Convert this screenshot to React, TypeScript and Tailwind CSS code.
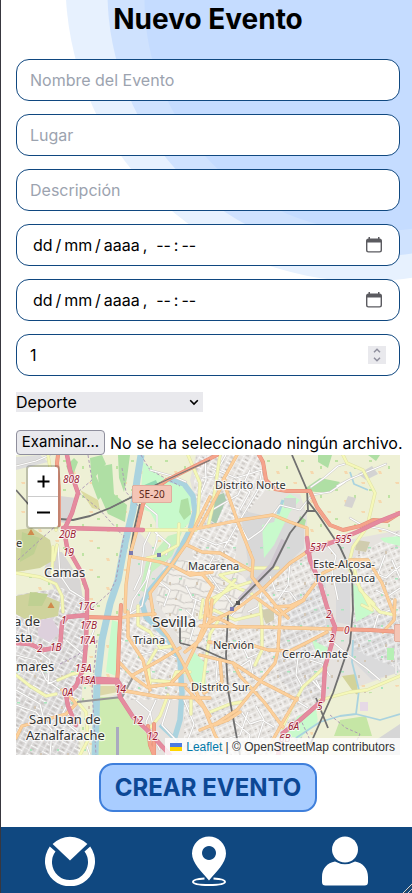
import { useState } from "react";
import type { ReactNode } from "react";

const fieldClass =
  "flex h-[42px] w-full items-center rounded-[13px] border border-[#104880] bg-white px-[13px] text-base text-black placeholder:text-[#9ca3af]";

function Backdrop() {
  return (
    <svg className="pointer-events-none absolute top-0 right-0 h-[290px] w-[412px]" viewBox="0 0 412 290" aria-hidden="true">
      <circle cx="365" cy="-18" r="299.5" fill="#e7f1fe" />
      <circle cx="372" cy="-8" r="264.5" fill="#cfe2fe" />
      <circle cx="376" cy="0" r="231.5" fill="#c5dcff" />
    </svg>
  );
}

const datePlaceholder = "dd\u2009/\u2009mm\u2009/\u2009aaaa\u2009,  --\u2009:\u2009--";

function DateField({ label }: { label: string }) {
  return (
    <div className={fieldClass}>
      <input
        type="text"
        aria-label={label}
        placeholder={datePlaceholder}
        className="h-6 min-w-0 flex-1 bg-transparent pl-[3px] outline-none placeholder:text-black"
      />
      <button type="button" aria-label="Abrir calendario" className="mr-[3px]">
        <svg width="18" height="18" viewBox="0 0 18 18" aria-hidden="true">
          <path
            fill="#5b5b60"
            fillRule="evenodd"
            d="M3.500 1h1.500v1.500h8V1h1.500v1.500a2.500 2.500 0 0 1 2.500 2.500V14a2.500 2.500 0 0 1-2.500 2.500h-11A2.500 2.500 0 0 1 1 14V5A2.500 2.500 0 0 1 3.500 2.500zM2.400 6.500V14a1.200 1.200 0 0 0 1.200 1.200h10.800a1.200 1.200 0 0 0 1.200-1.200V6.500z"
          />
        </svg>
      </button>
    </div>
  );
}

type RoadKind = "motorway" | "trunk" | "primary" | "secondary" | "minor";

const roadStyle: Record<RoadKind, { casing: string; fill: string; width: number }> = {
  motorway: { casing: "#dc7f95", fill: "#e58b9f", width: 3.8 },
  trunk: { casing: "#e38f78", fill: "#f5a48c", width: 3.4 },
  primary: { casing: "#ecbb83", fill: "#fcd09c", width: 2.7 },
  secondary: { casing: "#dfe0a6", fill: "#f5f8b8", width: 2.7 },
  minor: { casing: "#cbc9c6", fill: "#ffffff", width: 1.6 },
};

const roads: Record<RoadKind, string[]> = {
  minor: [
    "16 466L36 461L50 455", "58 545L60 575L70 590L86 600", "16 690L40 704L44 720", "28 620L30 645L50 660L48 684L66 676",
    "16 655L36 660L46 680L60 690", "16 705L36 712L52 730L50 755", "70 700L60 718L84 738L90 755", "66 640L84 655L94 630",
    "145 505L157 515L157 540L146 580L133 600L130 612", "151 530L144 545L141 575L134 590", "155 532L170 545L166 555",
    "150 470L172 476L186 482", "128 615L142 606L150 570", "133 640L150 634L166 640", "140 655L160 650L176 658",
    "136 700L150 712L154 730", "156 700L146 722L160 750", "170 700L162 725L176 740", "184 700L194 724L186 745",
    "205 455L206 480L198 500", "212 468L236 478L262 470L258 490L240 520L224 548", "234 480L250 492L240 510",
    "212 510L238 495L250 470", "226 455L214 476L202 478", "240 525L248 540L262 530L280 505L300 510L312 495L330 492L345 482",
    "200 538L216 545L232 540", "214 556L206 570L220 590L236 588", "262 590L258 607L248 612", "270 576L275 590L290 592L300 605",
    "290 563L288 585L278 600", "311 487L324 478L338 466L345 464", "337 486L350 479L362 474L386 464", "350 518L362 525L386 530L400 536",
    "327 545L336 556L332 572L338 600", "372 572L386 578L400 566", "376 590L388 596L400 588", "385 555L378 574L390 600", "390 610L378 615L374 628",
    "392 560L400 578", "333 642L348 655L366 668L380 680", "298 658L296 675L302 686", "310 660L322 664L330 676", "316 680L321 690L312 680",
    "292 698L308 708", "396 636L396 674", "214 590L226 596L236 610L228 620", "240 640L248 658L266 650", "238 668L250 660L254 680",
    "218 655L216 680L228 690L238 686", "240 710L250 724L262 720L274 727", "235 722L250 735L246 752", "256 706L264 720L256 745",
    "248 712L240 735L222 740", "196 600L190 624L176 620", "160 582L170 590L164 606", "186 586L192 598L202 602", "300 742L318 755", "186 610L196 620L190 640",
  ],
  secondary: [
    "16 573L40 577L56 584L62 596L63 612", "53 547L52 574", "48 455L52 480L57 500L56 530", "57 545L54 560", "16 675L30 686L46 696L56 694",
    "58 680L72 674L84 672", "76 700L86 712L88 740L80 755", "145 530L196 530", "179 524L178 545L160 555L147 558", "188 455L200 483L198 513L195 527",
    "220 455L212 510L208 527", "343 455L347 463L363 470L375 493L367 527L353 547L348 567L363 593L372 610L362 605", "220 575L250 568L278 568",
    "220 575L238 588L252 594", "210 600L232 588L250 582", "207 610L220 596L235 580", "138 606L138 625L150 632L160 648L172 646",
    "147 680L172 682L176 672L190 672", "150 684L148 664L156 650", "168 695L160 716L150 728", "191 697L191 714", "260 600L262 625L262 650L255 665",
    "327 665L303 687L293 705L282 728", "203 600L200 618L214 610L235 620L260 614", "202 690L206 660L210 634L220 618", "210 712L230 704L242 702",
    "368 600L380 612L395 615", "320 700L350 692L367 690L400 676", "352 560L360 590L374 604",
  ],
  primary: [
    "137 530L130 555L126 585L125 612", "133 557L160 562L173 566L190 575L212 572", "210 497L187 543L170 567L150 593L153 612L153 617",
    "187 545L202 552L220 553L250 570", "190 530L240 520L273 515L290 522L307 528L307 540", "237 455L223 480L237 520L253 560L252 577L277 607L288 618",
    "225 480L208 512L200 527", "307 552L290 563L262 590L235 610L214 620L204 626", "188 572L203 575L213 587L207 600L208 616L222 620L238 628",
    "252 577L262 590", "275 607L290 606L303 600L323 573L350 560L368 560L382 583L393 612", "200 626L260 627L333 629", "280 615L278 650L275 663L237 710L217 723L200 730",
    "255 597L280 615L304 600", "209 642L236 646L255 646L268 650L290 651L308 642L327 632", "200 655L233 663L262 682L297 700", "233 663L240 676L264 702L283 727",
    "297 698L284 720L270 745", "220 660L222 682L204 693", "186 688L204 708L215 735L224 750", "120 663L133 677L147 687L170 684L186 685", "120 690L160 697L210 698",
    "128 612L128 637L143 660L150 690", "133 675L160 660L180 648", "120 618L136 615L155 614", "153 617L168 636L183 663L200 700L210 716",
    "207 600L204 625L197 643L184 670L172 682", "16 738L22 726L40 721L66 714L76 704L68 694L62 690", "395 600L394 620L383 632", "215 725L228 720L240 712", "212 600L210 620L200 640L185 652",
  ],
  trunk: [
    "58 455L57 463L59 490L59 525", "217 455L167 480L150 492L143 504L137 530", "121 605L119 640L118 670L117 682", "259 455L263 462L266 480L275 489L287 491L310 491L317 507L330 525L343 530L360 526L373 520L387 521L400 513",
    "333 629L370 630L400 632", "154 724L154 755", "87 617L120 618", "148 726L150 745L154 755",
  ],
  motorway: [
    "67 455L70 470L78 493L72 513L64 530L67 547L80 570L87 590L87 612L86 643L84 667L76 686L66 695L68 706L76 725", "63 528L143 530",
    "16 643L30 644L43 650L60 647L62 623L67 617L87 615", "78 682L117 682", "78 679L100 679L117 680L122 688", "117 682L120 697L133 717L147 730L170 755",
    "400 513L380 521L357 532L333 542L307 552", "307 538L310 560L320 583L327 607L335 627L332 643L325 667L323 700L300 720L283 733L278 755",
  ],
};

function Roads({ kind }: { kind: RoadKind }) {
  const { casing, fill, width } = roadStyle[kind];
  const d = roads[kind].map((r) => "M" + r).join("");
  return (
    <g fill="none" strokeLinejoin="round" strokeLinecap="round">
      <path d={d} stroke={casing} strokeWidth={width + 0.6} />
      <path d={d} stroke={fill} strokeWidth={width - 0.4} />
    </g>
  );
}

const places: [string, number, number, number][] = [
  ["Distrito Norte", 215, 489, 11], ["Macarena", 188, 570, 11], ["Camas", 44, 577, 13], ["Este-Alcosa-", 313, 568, 11], ["Torreblanca", 314, 582, 11],
  ["Sevilla", 152, 627, 15], ["Triana", 133, 644, 11], ["Nervión", 213, 649, 11], ["Cerro-Amate", 282, 658, 11], ["Distrito Sur", 191, 691, 11],
  ["San Juan de", 29, 724, 13], ["Aznalfarache", 26, 740, 13], ["a de", 14, 626, 13], ["sta", 14, 642, 13], ["mares", 16, 671, 13], ["e", 16, 547, 11],
];

const exits: [string, number, number][] = [
  ["808", 63, 483], ["20B", 59, 538], ["19", 63, 556], ["17C", 78, 610], ["1", 61, 624], ["17B", 80, 629], ["17A", 79, 644], ["2", 37, 652], ["1B", 50, 651],
  ["15A", 75, 672], ["15A", 79, 684], ["0A", 62, 696], ["14", 115, 693], ["12", 132, 724], ["12", 147, 740], ["537", 310, 551], ["535", 335, 543],
  ["2", 326, 618], ["2", 329, 642], ["0", 344, 634], ["5", 317, 710], ["6A", 288, 730], ["6B", 279, 742],
];

function CityMap() {
  return (
    <svg className="block h-full w-full" viewBox="16 455 384 300" preserveAspectRatio="xMidYMid slice" role="img" aria-label="Mapa de Sevilla">
      <defs>
        <pattern id="blocks-a" width="13" height="9" patternUnits="userSpaceOnUse" patternTransform="rotate(28)">
          <path d="M0 0H13M0 4.500H8M0 0V9M8 0V9" stroke="#fff" strokeWidth="0.9" fill="none" />
          <path d="M3 2.500H6M10 6H12M2 7H5" stroke="#bcb8b5" strokeWidth="1.200" />
        </pattern>
        <pattern id="blocks-b" width="11" height="13" patternUnits="userSpaceOnUse" patternTransform="rotate(-24)">
          <path d="M0 0H11M0 7H11M0 0V13M5 0V7" stroke="#fff" strokeWidth="0.9" fill="none" />
          <path d="M2 3.500H4M7 10H9.500M2 10.500H4.500M7 3H9" stroke="#bab5b1" strokeWidth="1.200" />
        </pattern>
        <pattern id="blocks-c" width="17" height="15" patternUnits="userSpaceOnUse" patternTransform="rotate(12)">
          <path d="M0 2L9 0L17 2M9 0L7 9L0 11M7 9L17 12M12 3V10" stroke="#bfbbb8" strokeWidth="0.8" fill="none" />
        </pattern>
        <pattern id="specks" width="27" height="31" patternUnits="userSpaceOnUse">
          <path d="M3 5h2v2h-2zM17 20h3v1.500h-3z" fill="#a9e6bd" />
          <path d="M13 9h2v2h-2zM7 24h2v3h-2z" fill="#d3c7b6" />
        </pattern>
        <pattern id="orchards" width="34" height="29" patternUnits="userSpaceOnUse">
          <path d="M4 7h3l1 3h-3zM21 18h4v2h-3z" fill="#f6d8ae" />
          <path d="M14 2h2v3h-2zM29 25h3v2h-3z" fill="#bfe3a4" />
        </pattern>
      </defs>

      <rect x="16" y="455" width="384" height="300" fill="#eef0d5" />
      <rect x="16" y="455" width="384" height="300" fill="url(#orchards)" />

      {/* built-up land */}
      <g id="urban">
        <path d="M196 455H262L266 490L300 494L307 515V550L330 545L348 540L400 530V672L320 700L300 742L282 755H98V700L118 694L120 620L137 530L165 560L193 530L198 510L190 480Z" fill="#e5e2de" />
        <path d="M16 595L62 588L84 600L84 660L78 755H16ZM60 496L76 498L70 524L60 522ZM50 552L62 552L80 580L84 606L60 600L44 570Z" fill="#d8d6d5" />
        <path d="M16 457L40 455L48 462L16 470Z" fill="#dddddd" />
        <path d="M240 510L274 518L304 528V548L262 588L225 600L250 575Z" fill="#d8d8d8" />
        <path d="M284 605L324 575L332 628L290 626ZM354 616L400 616V672L372 680L352 660ZM336 580L350 575V625L336 622Z" fill="#dadadb" />
        <path d="M282 630L330 632L322 700L300 698L280 680L276 650Z" fill="#dbd9d8" />
      </g>
      <path d="M196 455H262L266 490L240 520L230 600L196 570L190 540Z" fill="url(#blocks-a)" />
      <path d="M156 600L165 560L230 560L254 590L234 630L200 640L186 650Z" fill="#f1eee8" />
      <path d="M156 600L165 560L230 560L254 590L234 630L200 640L186 650Z" fill="url(#blocks-c)" />
      <path d="M204 628L332 628L322 700L300 742L282 755H184V700Z" fill="url(#blocks-b)" />
      <path d="M262 590L306 552L326 590V628L262 626ZM350 560L400 530V670L354 650Z" fill="url(#blocks-b)" />
      <path d="M16 595L62 588L84 600L80 755H16ZM120 620L150 614L182 665V700H120Z" fill="url(#blocks-a)" />
      <rect x="122" y="540" width="278" height="160" fill="url(#specks)" />
      <rect x="16" y="660" width="80" height="95" fill="url(#specks)" />

      {/* hills to the west */}
      <path d="M16 530L32 528L50 540L54 560L40 568L16 572ZM16 596L36 592L60 602L58 616L30 622L16 614Z" fill="#cfd39c" />
      <path d="M22 532L40 538L34 554L20 562ZM30 592L48 594L42 606L28 606Z" fill="#bfd092" />
      <path d="M38 620L52 618L60 632L50 642L38 636Z" fill="#ddd0dc" />

      {/* parks and fields */}
      <g fill="#afdfa4">
        <path d="M90 458L102 455L106 464L96 476L104 494L98 500L92 484Z" />
        <path d="M97 467L112 464L114 494L127 505L125 522L108 514L100 496Z" />
        <path d="M118 455L130 455L127 478L124 492L119 478Z" />
        <path d="M66 466L74 458L78 462L72 478Z" />
        <path d="M303 490L320 478L340 482L332 492L316 492Z" />
        <path d="M318 455H332L328 468L318 462ZM368 455H380L376 461Z" />
        <path d="M300 516L306 520L304 528L298 524Z" />
      </g>
      <path d="M80 490L98 500L100 510L92 508Z" fill="#dcdba0" />
      <path d="M143 462L166 480L186 486L192 500L190 522L180 532L160 530L150 512L140 508Z" fill="#c8facc" />
      <path d="M168 536L182 532L172 556L152 572L144 592L140 590L146 562Z" fill="#c8f0c0" />
      <path d="M181 500L188 498L191 514L184 520L179 512Z" fill="#afdfa4" />
      <path d="M142 486L156 480L160 490L146 500Z" fill="#93d8b4" />
      <path d="M212 497L224 493L226 500L216 524L210 520Z" fill="#aacbaf" />
      <path d="M262 525L274 522L282 500L290 494L300 500L290 512L274 545L264 558Z" fill="#c8facc" />
      <path d="M112 620L118 622L116 676L106 672Z" fill="#c8facc" />
      <path d="M98 697L120 697L130 716L147 734L155 755H98Z" fill="#cdebb0" />
      <path d="M98 686L118 686L118 692L98 696Z" fill="#dcd7a8" />
      <path d="M192 650L204 662L206 685L196 692L186 676Z" fill="#c8facc" />
      <path d="M312 640L328 648L324 660L316 652ZM298 716L316 708L318 722L300 738L284 736Z" fill="#c8facc" />
      <path d="M352 583L364 592L374 612L356 622ZM380 538L400 536V546L384 542Z" fill="#c8facc" />
      <path d="M387 648h7v12h-7z" fill="#b6f0b5" />
      <path d="M260 610L274 608V620L266 624ZM357 540L370 542L366 552L355 550Z" fill="#d0ccae" />
      <path d="M342 676L356 674L358 694L344 698L340 690Z" fill="#d3d39a" />
      <path d="M342 676L352 690L358 696L400 686V740L310 742L324 702Z" fill="#eef0d5" />
      <path d="M340 720L366 716L372 736H334Z" fill="#c5e6a5" />
      <path d="M360 702h8v9h-8z" fill="#e6d9e6" />
      <path d="M376 740L400 724V755H376Z" fill="#d6d6d6" />
      <path d="M348 496L356 498L352 508L344 506Z" fill="#d5d3d1" />
      <path d="M284 498h12v10h-12zM358 474L372 466L378 474L366 480Z" fill="#d3d3d3" />

      {/* water */}
      <g fill="none" stroke="#aad3df" strokeLinejoin="round">
        <path d="M141 455L137 480L133 510L125 543L118 580L110 604L102 640L97 683L95 755" strokeWidth="7" />
        <path d="M168 479L184 484L193 496L195 512L190 530L173 563L150 590L142 603L146 617L167 637L180 660L182 693L180 720L174 740" strokeWidth="5.500" />
        <path d="M160 725L178 742" strokeWidth="4" />
        <path d="M350 472L354 484L368 490" strokeWidth="1.800" />
        <path d="M353 640L352 662L359 690L356 714L340 716L320 722L296 738M356 714L380 720L400 714" strokeWidth="1.800" />
        <path d="M283 500L278 514" strokeWidth="3" />
      </g>
      <path d="M116 727h3v28h-3z" fill="#aaa9c0" />

      {/* administrative bounds and footpaths */}
      <g fill="none" stroke="#a993b3" strokeWidth="0.9" strokeDasharray="3 2">
        <path d="M88 455L92 480L78 492L100 510L116 528L122 535M122 468L126 492L140 508L150 490" />
        <path d="M124 535L116 580L110 592L90 610M97 640L92 690L96 755M60 664L78 655L92 640" />
        <path d="M18 560L40 540L58 524M330 715L346 728L360 734L352 750M300 718L310 740" />
        <path d="M141 455L150 470L180 486" />
      </g>

      <Roads kind="minor" />
      <Roads kind="secondary" />

      {/* railways */}
      <g fill="none" strokeLinejoin="round">
        <path d="M240 600L272 566L284 540" stroke="#cfc7d0" strokeWidth="6" />
        <path
          id="rail"
          d="M210 460L160 483L110 508L90 516L73 520L47 518L30 506L16 490M292 455L307 490L308 510L290 533L273 567L237 603L228 614L226 655L228 690L240 755M307 500L317 513L340 547L352 573L353 610L350 643L333 693L310 745M316 511H306M140 504L134 530L130 553M180 643L200 648L233 663M180 620V643M316 698L328 728"
          stroke="#707070"
          strokeWidth="1.800"
        />
        <path d="M77 702L122 697L133 677" stroke="#979797" strokeWidth="2.200" />
      </g>

      <Roads kind="primary" />
      <Roads kind="trunk" />
      <Roads kind="motorway" />

      <path d="M210 460L160 483L110 508" fill="none" stroke="#777" strokeWidth="1.200" />
      <path d="M31 529l3.500 6h-7zM51 602l3.500 6h-7z" fill="#d08a4c" />
      <path d="M129 551h4v4h-4zM157 553h4v4h-4zM230 607h4v4h-4z" fill="#7a7ab0" />
      <path d="M236 601h4v4h-4z" fill="#555" />

      <g fontFamily='"Noto Sans", sans-serif' paintOrder="stroke" strokeLinejoin="round">
        <rect x="132.500" y="485.500" width="39" height="17" rx="1.500" fill="#f4c5b6" stroke="#cf9686" />
        <text x="139" y="498" fontSize="10" fill="#5e2718">SE-20</text>
        <rect x="394.500" y="624.500" width="12" height="17" rx="1.500" fill="#f4c5b6" stroke="#cf9686" />
        {exits.map(([t, x, y], i) => (
          <text key={i} x={x} y={y} fontSize="10" fontStyle="italic" fill="#9b1c32" stroke="#fff" strokeOpacity="0.75" strokeWidth="2">
            {t}
          </text>
        ))}
        {places.map(([t, x, y, size]) => (
          <text key={t} x={x} y={y} fontSize={size} fill="#333" stroke="#fff" strokeOpacity="0.75" strokeWidth="2.500">
            {t}
          </text>
        ))}
      </g>
    </svg>
  );
}

function NavButton({ label, children }: { label: string; children: ReactNode }) {
  return (
    <button type="button" aria-label={label}>
      {children}
    </button>
  );
}

export default function App() {
  const [seats, setSeats] = useState(1);
  return (
    <div className="relative flex min-h-screen flex-col overflow-hidden border-l border-[#38373f] bg-white font-['Inter',sans-serif] text-black">
      <Backdrop />
      <main className="relative flex-1 pr-3 pb-[15px] pl-[15px]">
        <h1 className="text-center text-[28px] leading-[38px] font-bold">Nuevo Evento</h1>
        <form className="mt-[21px]" onSubmit={(e) => e.preventDefault()}>
          <div className="flex flex-col gap-[13px]">
            <input className={fieldClass} type="text" aria-label="Nombre del Evento" placeholder="Nombre del Evento" />
            <input className={fieldClass} type="text" aria-label="Lugar" placeholder="Lugar" />
            <input className={fieldClass} type="text" aria-label="Descripción" placeholder="Descripción" />
            <DateField label="Fecha de inicio" />
            <DateField label="Fecha de fin" />
            <div className={fieldClass}>
              <input
                type="number"
                aria-label="Aforo"
                value={seats}
                onChange={(e) => setSeats(Number(e.target.value))}
                className="h-6 min-w-0 flex-1 bg-transparent outline-none [appearance:textfield] [&::-webkit-inner-spin-button]:appearance-none"
              />
              <div className="flex h-[18px] w-[18px] flex-col items-center justify-center gap-1 bg-[#e9e9ed]">
                <button type="button" aria-label="Aumentar" onClick={() => setSeats(seats + 1)}>
                  <svg className="block" width="8" height="5" viewBox="0 0 8 5" fill="none" stroke="#8f8f9d" strokeWidth="1.500" aria-hidden="true">
                    <path d="M1 4.200L4 1.200L7 4.200" />
                  </svg>
                </button>
                <button type="button" aria-label="Disminuir" onClick={() => setSeats(seats - 1)}>
                  <svg className="block" width="8" height="5" viewBox="0 0 8 5" fill="none" stroke="#8f8f9d" strokeWidth="1.500" aria-hidden="true">
                    <path d="M1 0.800L4 3.800L7 0.800" />
                  </svg>
                </button>
              </div>
            </div>
          </div>

          <div className="relative mt-4 w-[187px]">
            <select aria-label="Categoría" className="block h-5 w-full appearance-none bg-[#e9e9ed] text-base leading-5">
              <option>Deporte</option>
            </select>
            <svg className="pointer-events-none absolute top-[7px] right-1" width="10" height="7" viewBox="0 0 10 7" fill="none" stroke="#000" strokeWidth="1.600" aria-hidden="true">
              <path d="M1.200 1.200L5 5L8.800 1.200" />
            </svg>
          </div>

          <label className="mt-[18px] flex h-[25px] items-center gap-[5px] whitespace-nowrap">
            <input type="file" className="sr-only" />
            <span className="flex h-[25px] w-[89px] shrink-0 items-center justify-center rounded-[4px] border border-[#8f8f9d] bg-[#e9e9ed] text-[15px]">
              Examinar...
            </span>
            <span className="text-base">No se ha seleccionado ningún archivo.</span>
          </label>

          <div className="relative h-[300px] overflow-hidden bg-[#eef0d5]">
            <CityMap />
            <div className="absolute top-[10px] left-[10px] flex flex-col rounded-[4px] border-2 border-black/20 bg-white bg-clip-padding">
              <button type="button" aria-label="Acercar" className="flex h-[30px] w-[30px] items-center justify-center border-b border-[#ccc]">
                <svg width="13" height="13" viewBox="0 0 13 13" aria-hidden="true">
                  <path d="M0.500 6.500H12.500M6.500 0.500V12.500" stroke="#000" strokeWidth="2" />
                </svg>
              </button>
              <button type="button" aria-label="Alejar" className="flex h-[30px] w-[30px] items-center justify-center">
                <svg width="13" height="13" viewBox="0 0 13 13" aria-hidden="true">
                  <path d="M0 6.500H13" stroke="#000" strokeWidth="2" />
                </svg>
              </button>
            </div>
            <div className="absolute right-0 bottom-0 flex h-[17px] items-center bg-white/80 px-[5px] font-['Liberation_Sans',sans-serif] text-xs whitespace-pre text-[#333]">
              <svg className="mr-1" width="12" height="8" viewBox="0 0 12 8" aria-hidden="true">
                <path fill="#4C7BE1" d="M0 0h12v4H0z" />
                <path fill="#FFD500" d="M0 4h12v4H0z" />
              </svg>
              <a href="#leaflet" className="text-[#0078a8]">Leaflet</a>
              <span> | © OpenStreetMap contributors</span>
            </div>
          </div>

          <button
            type="submit"
            className="mx-auto mt-2 block h-[49px] rounded-[14px] border-2 border-[#3f7fdb] bg-[#a9cdff] px-[14px] text-2xl font-bold whitespace-nowrap text-[#0c4895]"
          >
            CREAR EVENTO
          </button>
        </form>
      </main>

      <nav aria-label="Principal" className="relative flex h-[66px] items-center justify-between bg-[#104880] px-11 pt-[2px]">
        <NavButton label="Inicio">
          <svg className="block" width="50" height="50" viewBox="0 0 50 50" fill="#fff" aria-hidden="true">
            <path d="M25 24.500L7.600 8A24.500 24.500 0 0 1 42.400 8Z" />
            <path d="M4.800 10.600L10.500 15.400A18 18 0 1 0 39.500 15.400L45.200 10.600A25 25 0 1 1 4.800 10.600Z" />
          </svg>
        </NavButton>
        <NavButton label="Mapa">
          <svg className="block" width="34" height="50" viewBox="0 0 34 50" aria-hidden="true">
            <path
              fill="#fff"
              fillRule="evenodd"
              d="M17 0.500A17 17 0 0 1 34 17.500C34 27 24 36 17 44.500C10 36 0 27 0 17.500A17 17 0 0 1 17 0.500ZM17 10a7 7 0 1 0 0.010 0Z"
            />
            <path fill="none" stroke="#fff" strokeWidth="2" d="M12.500 42.600C6 43 1 44 1 45.800C1 48 8 49 17 49S33 48 33 45.800C33 44 28 43 21.500 42.600" />
          </svg>
        </NavButton>
        <NavButton label="Perfil">
          <svg className="block" width="46" height="50" viewBox="0 0 46 50" fill="#fff" aria-hidden="true">
            <circle cx="23" cy="13.500" r="13" />
            <path d="M13 25.500Q23 31 33 25.500C41 26.500 46 33 46 41V46Q46 49.500 42.500 49.500H3.500Q0 49.500 0 46V41C0 33 5 26.500 13 25.500Z" />
          </svg>
        </NavButton>
        <svg className="absolute right-0 bottom-0" width="9" height="9" viewBox="0 0 9 9" fill="none" aria-hidden="true">
          <path d="M0 9L9 0M5 9L9 5" stroke="#d5d5d5" />
          <path d="M1.500 9L9 1.500M6.500 9L9 6.500" stroke="#444" />
        </svg>
      </nav>
    </div>
  );
}
